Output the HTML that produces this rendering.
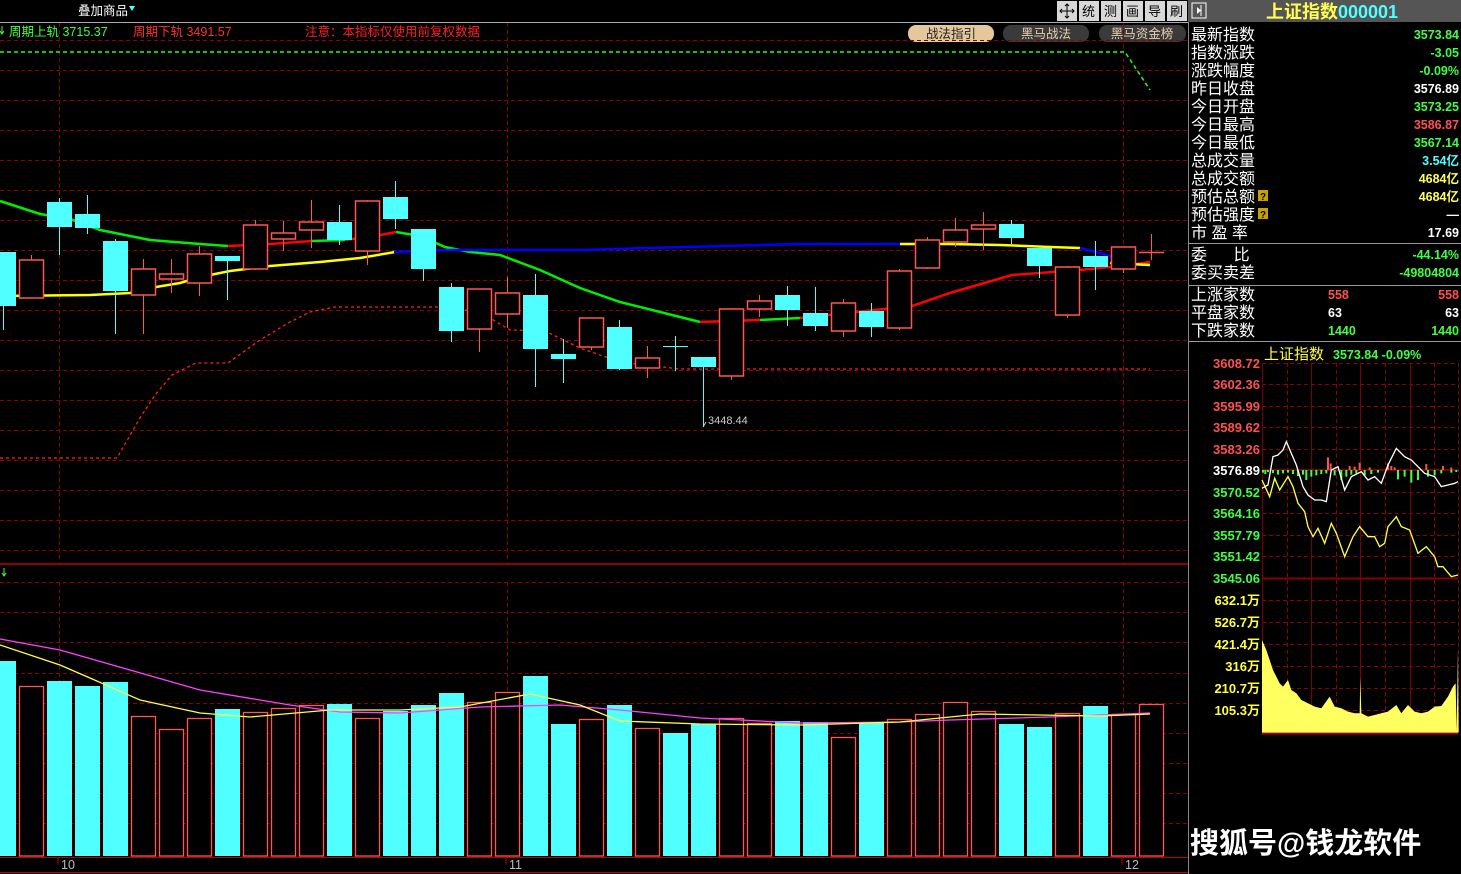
<!DOCTYPE html>
<html><head><meta charset="utf-8"><style>
html,body{margin:0;padding:0;background:#000;width:1461px;height:874px;overflow:hidden}
svg{display:block}
text{font-family:"Liberation Sans","Noto Sans CJK SC",sans-serif}
.cj{font-family:"Liberation Sans","Noto Sans CJK SC",sans-serif}
.lbl{font-size:16px;fill:#fff}
.v{font-size:12.5px;font-weight:bold;text-anchor:end}
.pl{font-size:13px;font-weight:bold;text-anchor:end}
</style></head><body>
<svg width="1461" height="874" viewBox="0 0 1461 874" xmlns="http://www.w3.org/2000/svg">
<rect width="1461" height="874" fill="#000"/>
<!-- header -->
<text x="78" y="15" font-size="12.5" fill="#fff">叠加商品</text>
<path d="M129 6 h6 l-3 5z" fill="#50ffff"/>
<line x1="0" y1="22.5" x2="1188" y2="22.5" stroke="#aaa"/>
<!-- toolbar -->
<g>
<rect x="1057" y="1" width="20" height="20" fill="#d8d8d8"/>
<path d="M1067 4v14M1060 11h14M1065 6l2-2 2 2M1065 16l2 2 2-2M1062 9l-2 2 2 2M1072 9l2 2-2 2" stroke="#000" fill="none"/>
<rect x="1079" y="1" width="20" height="20" fill="#d8d8d8"/><text x="1082" y="16" font-size="13" fill="#000">统</text>
<rect x="1101" y="1" width="20" height="20" fill="#d8d8d8"/><text x="1104" y="16" font-size="13" fill="#000">测</text>
<rect x="1123" y="1" width="20" height="20" fill="#d8d8d8"/><text x="1126" y="16" font-size="13" fill="#000">画</text>
<rect x="1145" y="1" width="20" height="20" fill="#d8d8d8"/><text x="1148" y="16" font-size="13" fill="#000">导</text>
<rect x="1167" y="1" width="20" height="20" fill="#d8d8d8"/><text x="1170" y="16" font-size="13" fill="#000">刷</text>
</g>
<rect x="1188" y="0" width="273" height="22" fill="#555"/>
<rect x="1192" y="3" width="14" height="15" fill="none" stroke="#fff"/>
<path d="M1197 7l4 3.5-4 3.5z" fill="#fff"/>
<line x1="1201" y1="5" x2="1201" y2="16" stroke="#fff"/>
<text x="1266" y="18" font-size="18" font-weight="bold" fill="#ffff50">上证指数<tspan fill="#50ffff">000001</tspan></text>
<!-- indicator line -->
<path d="M2 26v8M0 31l2 3 2-3" stroke="#40ff40" fill="none"/>
<text x="9" y="36" font-size="12.5" fill="#40ff40">周期上轨 3715.37</text>
<text x="133" y="36" font-size="12.5" fill="#ff3030">周期下轨 3491.57</text>
<text x="305" y="36" font-size="12.5" fill="#ff2020">注意：本指标仅使用前复权数据</text>
<!-- pills -->
<rect x="908" y="25" width="86" height="17" rx="8" fill="#e6c79c"/>
<text x="951" y="38" font-size="12.5" fill="#222" text-anchor="middle">战法指引</text>
<rect x="1003" y="25" width="86" height="17" rx="8" fill="#3a3a3a"/>
<text x="1046" y="38" font-size="12.5" fill="#e8d0b0" text-anchor="middle">黑马战法</text>
<rect x="1099" y="25" width="87" height="17" rx="8" fill="#3a3a3a"/>
<text x="1142" y="38" font-size="12.5" fill="#e8d0b0" text-anchor="middle">黑马资金榜</text>

<!-- grid main -->
<g stroke="#8b0000" stroke-dasharray="4,3" stroke-width="1">
<path d="M0 40.5H1188M0 70.5H1188M0 100.5H1188M0 130.5H1188M0 160.5H1188M0 190.5H1188M0 220.5H1188M0 250.5H1188M0 280.5H1188M0 310.5H1188M0 340.5H1188M0 370.5H1188M0 400.5H1188M0 430.5H1188M0 460.5H1188M0 490.5H1188M0 520.5H1188M0 550.5H1188"/>
<path d="M59.5 23V563M507.5 23V563M1123.5 23V563"/>
<path d="M0 582.5H1188M0 612.5H1188M0 642.5H1188M0 673.5H1188M0 703.5H1188M0 733.5H1188M0 763.5H1188M0 793.5H1188M0 823.5H1188"/>
<path d="M59.5 582V856M507.5 582V856M1123.5 582V856"/>
</g>
<line x1="0" y1="564" x2="1188" y2="564" stroke="#c00000" stroke-width="1.5"/>
<path d="M4 568v8M2 573l2 3 2-3" stroke="#40ff40" fill="none"/>

<!-- bands -->
<path d="M0 52H1125L1150 90" stroke="#20ff20" stroke-width="1.5" stroke-dasharray="4,3" fill="none"/>
<path d="M0 458H117L140 418L155 395L172 375L196 363H228L260 340L290 322L310 312L335 307H438L480 312L510 330L545 331L580 348L620 362L680 369H1150" stroke="#ff2020" stroke-width="1.3" stroke-dasharray="3,3" fill="none"/>
<!-- MAs -->
<path d="M0 296L90 295L130 293L150 288L180 283L200 277L230 271L270 266L320 262L360 258L395 252" stroke="#ffff00" stroke-width="2.5" fill="none"/>
<path d="M0 201L40 214L70 219L100 230L120 234L150 240L175 242L200 244L228 246" stroke="#00ee00" stroke-width="2.5" fill="none"/>
<path d="M228 246L270 244L312 241" stroke="#ff0000" stroke-width="2.5" fill="none"/>
<path d="M312 241L345 240" stroke="#00ee00" stroke-width="2.5" fill="none"/>
<path d="M345 240L375 236L396 232" stroke="#ff0000" stroke-width="2.5" fill="none"/>
<path d="M396 232L420 236L445 247L470 252L500 255L540 270L580 288L620 302L660 312L700 322" stroke="#00ee00" stroke-width="2.5" fill="none"/>
<path d="M700 322L760 320" stroke="#ff0000" stroke-width="2.5" fill="none"/>
<path d="M760 320L800 318" stroke="#00ee00" stroke-width="2.5" fill="none"/>
<path d="M800 318L912 306L950 293L1012 275L1080 270L1130 265L1150 262" stroke="#ff0000" stroke-width="2.5" fill="none"/>
<path d="M394 252L450 250L580 250L650 248L800 244L900 244" stroke="#0000ff" stroke-width="2.5" fill="none"/>
<path d="M900 244L950 244L1000 245L1050 247L1080 248" stroke="#ffff00" stroke-width="2.5" fill="none"/>
<path d="M1080 248L1100 253L1120 259" stroke="#0000ff" stroke-width="2.5" fill="none"/>
<path d="M1110 263L1150 265" stroke="#ffff00" stroke-width="2.5" fill="none"/>

<!-- candles -->
<g stroke-width="1">
<g stroke="#50ffff" fill="#50ffff">
<line x1="3.5" y1="252" x2="3.5" y2="330"/><rect x="-9" y="252" width="25" height="54" stroke="none"/>
<line x1="59.5" y1="198" x2="59.5" y2="255"/><rect x="47" y="202" width="25" height="25" stroke="none"/>
<line x1="87.5" y1="195" x2="87.5" y2="234"/><rect x="75" y="214" width="25" height="14" stroke="none"/>
<line x1="115.5" y1="239" x2="115.5" y2="334"/><rect x="103" y="241" width="25" height="50" stroke="none"/>
<line x1="227.5" y1="256" x2="227.5" y2="300"/><rect x="215" y="256" width="25" height="5" stroke="none"/>
<line x1="339.5" y1="205" x2="339.5" y2="245"/><rect x="327" y="222" width="25" height="18" stroke="none"/>
<line x1="395.5" y1="181" x2="395.5" y2="229"/><rect x="383" y="197" width="25" height="22" stroke="none"/>
<line x1="423.5" y1="229" x2="423.5" y2="281"/><rect x="411" y="229" width="25" height="40" stroke="none"/>
<line x1="451.5" y1="283" x2="451.5" y2="342"/><rect x="439" y="287" width="25" height="44" stroke="none"/>
<line x1="535.5" y1="274" x2="535.5" y2="387"/><rect x="523" y="295" width="25" height="54" stroke="none"/>
<line x1="563.5" y1="339" x2="563.5" y2="383"/><rect x="551" y="354" width="25" height="5" stroke="none"/>
<line x1="619.5" y1="320" x2="619.5" y2="370"/><rect x="607" y="327" width="25" height="42" stroke="none"/>
<line x1="675.5" y1="336" x2="675.5" y2="371"/><line x1="663" y1="346.5" x2="688" y2="346.5"/>
<line x1="703.5" y1="357" x2="703.5" y2="427"/><rect x="691" y="357" width="25" height="10" stroke="none"/>
<line x1="787.5" y1="286" x2="787.5" y2="326"/><rect x="775" y="295" width="25" height="15" stroke="none"/>
<line x1="815.5" y1="287" x2="815.5" y2="331"/><rect x="803" y="313" width="25" height="13" stroke="none"/>
<line x1="871.5" y1="303" x2="871.5" y2="337"/><rect x="859" y="311" width="25" height="16" stroke="none"/>
<line x1="1011.5" y1="220" x2="1011.5" y2="244"/><rect x="999" y="224" width="25" height="14" stroke="none"/>
<line x1="1039.5" y1="248" x2="1039.5" y2="278"/><rect x="1027" y="248" width="25" height="18" stroke="none"/>
<line x1="1095.5" y1="241" x2="1095.5" y2="290"/><rect x="1083" y="256" width="25" height="11" stroke="none"/>
</g>
<g stroke="#ff5555" fill="#000" stroke-width="1.5">
<line x1="31.5" y1="255" x2="31.5" y2="298" stroke-width="1"/><rect x="19.5" y="260" width="24" height="38"/>
<line x1="143.5" y1="259" x2="143.5" y2="334" stroke-width="1"/><rect x="131.5" y="269" width="24" height="26"/>
<line x1="171.5" y1="259" x2="171.5" y2="293" stroke-width="1"/><rect x="159.5" y="274" width="24" height="5"/>
<line x1="199.5" y1="246" x2="199.5" y2="296" stroke-width="1"/><rect x="187.5" y="254" width="24" height="29"/>
<line x1="255.5" y1="220" x2="255.5" y2="270" stroke-width="1"/><rect x="243.5" y="225" width="24" height="44"/>
<line x1="283.5" y1="221" x2="283.5" y2="251" stroke-width="1"/><rect x="271.5" y="233" width="24" height="6"/>
<line x1="311.5" y1="200" x2="311.5" y2="248" stroke-width="1"/><rect x="299.5" y="222" width="24" height="8"/>
<line x1="367.5" y1="200" x2="367.5" y2="265" stroke-width="1"/><rect x="355.5" y="201" width="24" height="50"/>
<line x1="479.5" y1="289" x2="479.5" y2="352" stroke-width="1"/><rect x="467.5" y="289" width="24" height="40"/>
<line x1="507.5" y1="277" x2="507.5" y2="328" stroke-width="1"/><rect x="495.5" y="293" width="24" height="21"/>
<line x1="591.5" y1="318" x2="591.5" y2="350" stroke-width="1"/><rect x="579.5" y="318" width="24" height="29"/>
<line x1="647.5" y1="346" x2="647.5" y2="378" stroke-width="1"/><rect x="635.5" y="358" width="24" height="10"/>
<line x1="731.5" y1="309" x2="731.5" y2="380" stroke-width="1"/><rect x="719.5" y="309" width="24" height="67"/>
<line x1="759.5" y1="295" x2="759.5" y2="317" stroke-width="1"/><rect x="747.5" y="301" width="24" height="8"/>
<line x1="843.5" y1="299" x2="843.5" y2="337" stroke-width="1"/><rect x="831.5" y="303" width="24" height="28"/>
<line x1="899.5" y1="269" x2="899.5" y2="330" stroke-width="1"/><rect x="887.5" y="271" width="24" height="57"/>
<line x1="927.5" y1="237" x2="927.5" y2="269" stroke-width="1"/><rect x="915.5" y="240" width="24" height="28"/>
<line x1="955.5" y1="218" x2="955.5" y2="247" stroke-width="1"/><rect x="943.5" y="230" width="24" height="12"/>
<line x1="983.5" y1="212" x2="983.5" y2="250" stroke-width="1"/><rect x="971.5" y="225" width="24" height="4"/>
<line x1="1067.5" y1="266" x2="1067.5" y2="318" stroke-width="1"/><rect x="1055.5" y="267" width="24" height="48"/>
<line x1="1123.5" y1="247" x2="1123.5" y2="273" stroke-width="1"/><rect x="1111.5" y="247" width="24" height="22"/>
<line x1="1151.5" y1="234" x2="1151.5" y2="260" stroke-width="1"/><line x1="1139" y1="252.5" x2="1164" y2="252.5"/>
</g>
</g>
<path d="M703 427l3-5" stroke="#ccc"/>
<text x="708" y="424" font-size="11" fill="#ccc" font-family="Liberation Mono,monospace">3448.44</text>

<!-- volume -->
<g fill="#50ffff">
<rect x="-9" y="661" width="25" height="195"/>
<rect x="47" y="681" width="25" height="175"/>
<rect x="75" y="686" width="25" height="170"/>
<rect x="103" y="682" width="25" height="174"/>
<rect x="215" y="709" width="25" height="147"/>
<rect x="327" y="704" width="25" height="152"/>
<rect x="383" y="711" width="25" height="145"/>
<rect x="411" y="705" width="25" height="151"/>
<rect x="439" y="693" width="25" height="163"/>
<rect x="523" y="676" width="25" height="180"/>
<rect x="551" y="724" width="25" height="132"/>
<rect x="607" y="705" width="25" height="151"/>
<rect x="663" y="733" width="25" height="123"/>
<rect x="691" y="724" width="25" height="132"/>
<rect x="775" y="721" width="25" height="135"/>
<rect x="803" y="722" width="25" height="134"/>
<rect x="859" y="722" width="25" height="134"/>
<rect x="999" y="724" width="25" height="132"/>
<rect x="1027" y="727" width="25" height="129"/>
<rect x="1083" y="706" width="25" height="150"/>
</g>
<g fill="#000" stroke="#ff5555" stroke-width="1.3">
<rect x="19.5" y="686.5" width="24" height="169.5"/>
<rect x="131.5" y="716.5" width="24" height="139.5"/>
<rect x="159.5" y="729.5" width="24" height="126.5"/>
<rect x="187.5" y="718.5" width="24" height="137.5"/>
<rect x="243.5" y="712.5" width="24" height="143.5"/>
<rect x="271.5" y="708.5" width="24" height="147.5"/>
<rect x="299.5" y="705.5" width="24" height="150.5"/>
<rect x="355.5" y="718.5" width="24" height="137.5"/>
<rect x="467.5" y="702.5" width="24" height="153.5"/>
<rect x="495.5" y="692.5" width="24" height="163.5"/>
<rect x="579.5" y="719.5" width="24" height="136.5"/>
<rect x="635.5" y="728.5" width="24" height="127.5"/>
<rect x="719.5" y="718.5" width="24" height="137.5"/>
<rect x="747.5" y="723.5" width="24" height="132.5"/>
<rect x="831.5" y="737.5" width="24" height="118.5"/>
<rect x="887.5" y="719.5" width="24" height="136.5"/>
<rect x="915.5" y="714.5" width="24" height="141.5"/>
<rect x="943.5" y="702.5" width="24" height="153.5"/>
<rect x="971.5" y="711.5" width="24" height="144.5"/>
<rect x="1055.5" y="713.5" width="24" height="142.5"/>
<rect x="1111.5" y="714.5" width="24" height="141.5"/>
<rect x="1139.5" y="704.5" width="24" height="151.5"/>
</g>
<path d="M0 639L60 650L130 670L200 690L290 705L340 712L400 713L480 707L560 705L620 710L700 718L800 723L900 722L950 720L1050 717L1150 713" stroke="#ff40ff" stroke-width="1.3" fill="none"/>
<path d="M0 645L60 665L90 678L140 700L200 713L250 717L330 710L400 710L460 707L530 694L580 705L620 721L700 724L800 725L900 722L980 714L1100 716L1150 714" stroke="#ffff40" stroke-width="1.3" fill="none"/>
<line x1="0" y1="857.5" x2="1188" y2="857.5" stroke="#c00000"/>
<line x1="0" y1="872.5" x2="1188" y2="872.5" stroke="#c00000"/>
<path d="M58 857v8M506 857v8M1122 857v8" stroke="#c00000"/>
<text x="61" y="869" font-size="12.5" fill="#bbb">10</text>
<text x="509" y="869" font-size="12.5" fill="#bbb">11</text>
<text x="1125" y="869" font-size="12.5" fill="#bbb">12</text>

<!-- right panel -->
<line x1="1188.5" y1="22" x2="1188.5" y2="874" stroke="#888"/>
<g class="lbl">
<text x="1191" y="40" class="lbl">最新指数</text>
<text x="1191" y="58" class="lbl">指数涨跌</text>
<text x="1191" y="76" class="lbl">涨跌幅度</text>
<text x="1191" y="94" class="lbl">昨日收盘</text>
<text x="1191" y="112" class="lbl">今日开盘</text>
<text x="1191" y="130" class="lbl">今日最高</text>
<text x="1191" y="148" class="lbl">今日最低</text>
<text x="1191" y="166" class="lbl">总成交量</text>
<text x="1191" y="184" class="lbl">总成交额</text>
<text x="1191" y="202" class="lbl">预估总额</text>
<text x="1191" y="220" class="lbl">预估强度</text>
<text x="1191" y="238" class="lbl" xml:space="preserve">市 盈 率</text>
<text x="1191" y="260" class="lbl" xml:space="preserve">委      比</text>
<text x="1191" y="278" class="lbl">委买卖差</text>
<text x="1191" y="300" class="lbl">上涨家数</text>
<text x="1191" y="318" class="lbl">平盘家数</text>
<text x="1191" y="336" class="lbl">下跌家数</text>
</g>
<rect x="1258" y="190" width="10" height="11" fill="#c8a000"/><text x="1260" y="200" font-size="10" font-weight="bold" fill="#000">?</text>
<rect x="1258" y="208" width="10" height="11" fill="#c8a000"/><text x="1260" y="218" font-size="10" font-weight="bold" fill="#000">?</text>
<text x="1459" y="39" class="v" fill="#40ff40">3573.84</text>
<text x="1459" y="57" class="v" fill="#40ff40">-3.05</text>
<text x="1459" y="75" class="v" fill="#40ff40">-0.09%</text>
<text x="1459" y="93" class="v" fill="#fff">3576.89</text>
<text x="1459" y="111" class="v" fill="#40ff40">3573.25</text>
<text x="1459" y="129" class="v" fill="#ff5050">3586.87</text>
<text x="1459" y="147" class="v" fill="#40ff40">3567.14</text>
<text x="1459" y="165" class="v" fill="#50ffff">3.54亿</text>
<text x="1459" y="183" class="v" fill="#ffff50">4684亿</text>
<text x="1459" y="201" class="v" fill="#ffff50">4684亿</text>
<text x="1459" y="219" class="v" fill="#fff">—</text>
<text x="1459" y="237" class="v" fill="#fff">17.69</text>
<line x1="1189" y1="243.5" x2="1461" y2="243.5" stroke="#999"/>
<text x="1459" y="259" class="v" fill="#40ff40">-44.14%</text>
<text x="1459" y="277" class="v" fill="#40ff40">-49804804</text>
<line x1="1189" y1="285.5" x2="1461" y2="285.5" stroke="#999"/>
<text x="1328" y="299" font-size="12.5" font-weight="bold" fill="#ff5050">558</text>
<text x="1459" y="299" class="v" fill="#ff5050">558</text>
<text x="1328" y="317" font-size="12.5" font-weight="bold" fill="#fff">63</text>
<text x="1459" y="317" class="v" fill="#fff">63</text>
<text x="1328" y="335" font-size="12.5" font-weight="bold" fill="#40ff40">1440</text>
<text x="1459" y="335" class="v" fill="#40ff40">1440</text>
<line x1="1189" y1="341.5" x2="1461" y2="341.5" stroke="#999"/>

<!-- intraday -->
<text x="1264" y="359" font-size="15" fill="#ffff40">上证指数</text>
<text x="1333" y="359" font-size="12.5" font-weight="bold" fill="#40ff40">3573.84 -0.09%</text>
<g stroke="#8b0000" stroke-dasharray="4,3">
<path d="M1262 363.5H1458M1262 384.5H1458M1262 406.5H1458M1262 427.5H1458M1262 449.5H1458M1262 492.5H1458M1262 513.5H1458M1262 535.5H1458M1262 556.5H1458M1262 600.5H1458M1262 622.5H1458M1262 644.5H1458M1262 666.5H1458M1262 688.5H1458M1262 710.5H1458"/>
<path d="M1287.5 363V733M1336.5 363V733M1385.5 363V733M1434.5 363V733M1458.5 363V733"/>
</g>
<g stroke="#7a0000">
<path d="M1262.5 363V733M1311.5 363V733M1360.5 363V733M1410.5 363V733"/>
</g>
<line x1="1262" y1="578.5" x2="1458" y2="578.5" stroke="#8b0000" stroke-width="2"/>
<line x1="1262" y1="733.5" x2="1458" y2="733.5" stroke="#a00000" stroke-width="2"/>
<line x1="1262" y1="470" x2="1458" y2="470" stroke="#a00000" stroke-width="1.5"/>
<g font-weight="bold" font-size="13" text-anchor="end">
<text x="1260" y="368" fill="#ff5050">3608.72</text>
<text x="1260" y="389" fill="#ff5050">3602.36</text>
<text x="1260" y="411" fill="#ff5050">3595.99</text>
<text x="1260" y="432" fill="#ff5050">3589.62</text>
<text x="1260" y="454" fill="#ff5050">3583.26</text>
<text x="1260" y="475" fill="#fff">3576.89</text>
<text x="1260" y="497" fill="#40ff40">3570.52</text>
<text x="1260" y="518" fill="#40ff40">3564.16</text>
<text x="1260" y="540" fill="#40ff40">3557.79</text>
<text x="1260" y="561" fill="#40ff40">3551.42</text>
<text x="1260" y="583" fill="#40ff40">3545.06</text>
<text x="1260" y="605" fill="#ffff40">632.1万</text>
<text x="1260" y="627" fill="#ffff40">526.7万</text>
<text x="1260" y="649" fill="#ffff40">421.4万</text>
<text x="1260" y="671" fill="#ffff40">316万</text>
<text x="1260" y="693" fill="#ffff40">210.7万</text>
<text x="1260" y="715" fill="#ffff40">105.3万</text>
</g>
<g transform="translate(1188,430) scale(0.3333)">
<path d="M225 120v8M232 120v12M240 120v6M255 120v9M270 120v14M285 120v10M300 120v8M315 120v12M330 120v18M345 120v14M355 120v30M370 120v20M385 120v16M400 120v12M415 120v10M440 120v16M460 120v30M475 120v20M490 120v14M505 120v10M530 120v16M550 120v12M570 120v8M630 120v28M650 120v20M670 120v38M690 120v30M720 120v20M740 120v16M760 120v10M790 120v8M805 120v6" stroke="#40ff40" stroke-width="6"/>
<path d="M420 120v-38M428 120v-20M485 120v-12M500 120v-10M515 120v-22M545 120v-8M600 120v-20M610 120v-12M620 120v-8M715 120v-18M765 120v-12M790 120v-8" stroke="#ff5050" stroke-width="6"/>
<path d="M222 175L240 165L255 80L270 75L285 60L295 35L310 70L325 105L345 170L360 195L380 210L400 210L415 215L430 120L450 110L470 180L490 140L520 125L540 150L560 140L580 160L600 105L625 55L650 80L670 90L690 110L710 130L740 140L760 170L780 165L800 160L810 155" stroke="#fff" stroke-width="4" fill="none"/>
<path d="M222 150L245 200L260 145L275 180L300 140L315 170L330 220L350 245L360 290L375 320L390 295L410 340L430 280L445 310L470 380L495 320L515 290L540 320L560 320L575 350L590 340L600 290L625 260L640 290L665 300L690 370L715 350L740 380L750 410L765 410L790 440L810 435" stroke="#ffff40" stroke-width="4" fill="none"/>
<path d="M222 908L222 630L235 660L245 690L255 720L265 740L275 760L285 770L300 750L310 780L325 790L340 810L360 820L380 830L400 835L425 800L440 830L460 835L480 845L500 850L515 850L517 740L520 850L540 860L560 855L580 850L600 845L625 825L640 850L660 825L680 845L700 850L720 845L740 830L760 828L780 800L795 770L803 760L806 905L810 655L812 908Z" fill="#ffff60"/>
</g>

<text x="1190" y="853" font-size="29" font-weight="bold" fill="#fff">搜狐号@钱龙软件</text>
</svg>
</body></html>
